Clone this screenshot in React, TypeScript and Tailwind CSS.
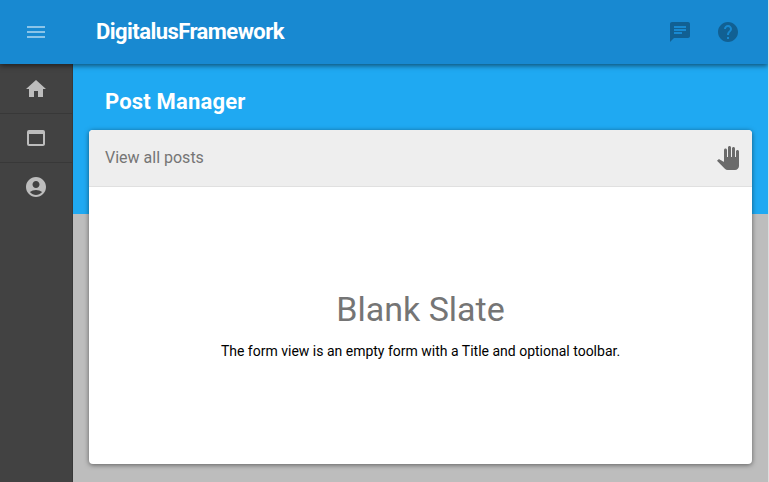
import React from "react";
import { MdMenu, MdChat, MdHelp, MdHome, MdWebAsset, MdAccountCircle, MdPanTool } from "react-icons/md";

export default function App() {
  return (
    <div className="flex h-[482px] w-[769px] flex-col overflow-hidden border-r border-[#dedede] bg-[#bdbdbd] font-['Roboto',sans-serif]">
      <header className="relative z-10 flex h-16 shrink-0 items-center bg-[#1889d1] shadow-[0_2px_5px_rgba(0,0,0,0.5)]">
        <div className="flex w-[72px] justify-center text-[#8bc4e8]"><MdMenu size={24} /></div>
        <h1 className="ml-6 flex-1 pb-px text-[22px] font-bold tracking-[-0.55px] text-white">DigitalusFramework</h1>
        <div className="mr-7 flex gap-6 text-[#116093]"><MdChat size={24} /><MdHelp size={24} /></div>
      </header>
      <div className="flex min-h-0 flex-1">
        <nav className="w-[73px] shrink-0 border-r border-[#383838] bg-[#424242] text-[#bdbdbd]">
          <div className="flex h-[49px] items-center justify-center"><MdHome size={24} /></div>
          <div className="flex h-[49px] items-center justify-center border-t border-[#383838]"><MdWebAsset size={24} /></div>
          <div className="flex h-[49px] items-center justify-center border-t border-[#383838]"><MdAccountCircle size={24} /></div>
        </nav>
        <main className="flex-1 bg-[linear-gradient(#1fa9f2_150px,#bdbdbd_150px)] px-4">
          <h2 className="flex h-[66px] items-center pt-2 pl-4 text-[22px] font-bold tracking-[0.18px] text-white">Post Manager</h2>
          <section className="h-[334px] w-[663px] overflow-hidden rounded bg-white shadow-[0_1px_5px_rgba(0,0,0,0.5)]">
            <div className="flex h-[57px] items-center justify-between border-b border-[#e0e0e0] bg-[#eeeeee] pr-3 pl-4 text-[#757575]">
              <span className="text-base">View all posts</span><MdPanTool size={24} className="text-[#6b6b6b]" />
            </div>
            <div className="flex h-[277px] flex-col items-center pt-[102px]">
              <h3 className="text-[34px] leading-10 text-[#757575]">Blank Slate</h3>
              <p className="mt-3 text-sm text-black">The form view is an empty form with a Title and optional toolbar.</p>
            </div>
          </section>
        </main>
      </div>
    </div>
  );
}
